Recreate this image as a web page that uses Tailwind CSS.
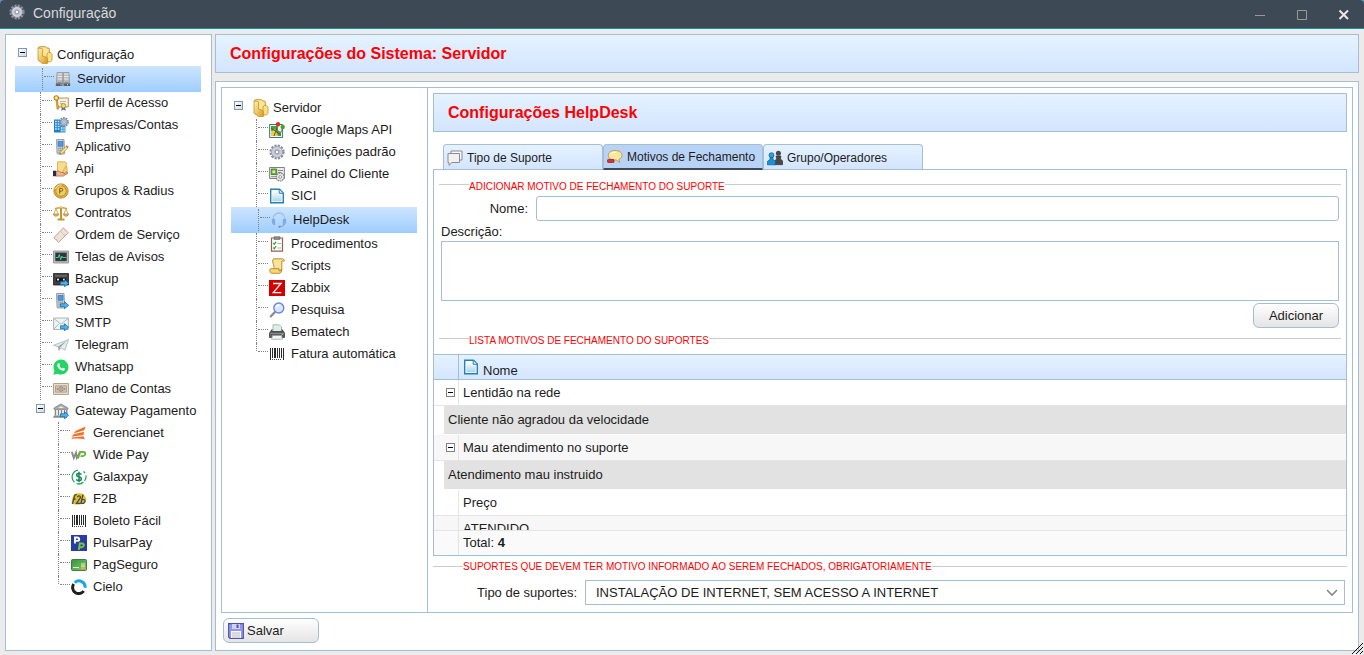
<!DOCTYPE html>
<html lang="pt-BR">
<head>
<meta charset="utf-8">
<meta name="viewport" content="width=device-width, initial-scale=1">
<title>Configuração</title>
<script src="https://cdn.jsdelivr.net/npm/@tailwindcss/browser@4"></script>
</head>
<body class="font-['Liberation_Sans',Arial,sans-serif] text-[13px] text-[#1c1c1c] bg-[#3a9ad0]">

<svg class="absolute size-0" aria-hidden="true">
  <defs>
    <linearGradient id="gGold" x1="0" y1="0" x2="1" y2="1"><stop offset="0" stop-color="#fff3b8"/><stop offset="1" stop-color="#d99a1e"/></linearGradient>
    <linearGradient id="gBlue" x1="0" y1="0" x2="0" y2="1"><stop offset="0" stop-color="#ffffff"/><stop offset="1" stop-color="#a9d4ee"/></linearGradient>
    <linearGradient id="gGreen" x1="0" y1="0" x2="1" y2="1"><stop offset="0" stop-color="#3b9040"/><stop offset="1" stop-color="#7fce6a"/></linearGradient>
  </defs>
  <symbol id="gear" viewBox="0 0 16 16"><circle cx="8" cy="8" r="6.4" fill="none" stroke="#8b8f9f" stroke-width="2.4" stroke-dasharray="2.2 1.15"/><circle cx="8" cy="8" r="5.4" fill="#d3d5e2" stroke="#9295a8" stroke-width=".7"/><circle cx="8" cy="8" r="3.6" fill="#bfc2d1"/><circle cx="8" cy="8" r="1.9" fill="#fff" stroke="#83879a" stroke-width=".9"/></symbol>
  <symbol id="folder" viewBox="0 0 16 18"><path d="M1.500 2q0-1.300 1.300-1.300h5.700L9.600 2h1.700q1 0 1 1v12H2z" fill="#ffe59a" stroke="#c08c1c" stroke-width=".9"/><path d="M10 7.500l1.500-1h2l1.500 1.700v6.300l-1.500 1.300H10z" fill="#ffe08a" stroke="#c8921f" stroke-width=".8"/><path d="M1 2l3.700.500q.9.100.9 1v6.600l3.800 1.200q1 .3 1 1.200v5L5.500 17.500 1 14z" fill="url(#gGold)" stroke="#c8921f" stroke-width=".8"/></symbol>
  <symbol id="server" viewBox="0 0 16 16"><path d="M2 1.500h5.700v11H1.500zM8.300 1.500H14l.5 11H8.300z" fill="#b9b9b9" stroke="#808080" stroke-width=".6"/><path d="M2.500 3h4.800M2.500 5.500h4.800M2.500 8h4.800M8.800 3h4.800M8.800 5.500h4.800M8.800 8h4.800" stroke="#ececec" stroke-width="1"/><path d="M.8 12.500h6.700v2.500H.8zM8.500 12.500h6.700v2.500H8.500z" fill="#606060"/><path d="M2.500 11.400h4M9.500 11.400h4" stroke="#8b8b8b"/><path d="M5.500 13.700h1M12 13.700h1" stroke="#ddd"/></symbol>
  <symbol id="cert" viewBox="0 0 16 16"><path d="M3.500 3h11.800v9H5z" fill="#f6f3e6" stroke="#b48a3c" stroke-width=".9"/><path d="M7 6.500h6M7 8.500h3" stroke="#999" stroke-width=".7"/><circle cx="3.300" cy="3" r="2.300" fill="#ffdc63" stroke="#a87412"/><circle cx="3" cy="2.700" r=".8" fill="#fff"/><path d="M3 5.300l1 9 1.800-.3-.4-1.700 1-.3-.7-1-.6.100-.8-6.100z" fill="#e9b53c" stroke="#9e6c10" stroke-width=".5"/><path d="M9 11.500l-.8 4.200 2.200-1.200 2.300 1.300-.8-4.300z" fill="#3170c9"/><circle cx="10.500" cy="10.800" r="2.300" fill="#ffd65a" stroke="#b3801b" stroke-width=".8"/></symbol>
  <symbol id="company" viewBox="0 0 16 16"><path d="M1 2.500h6.500V15.500H1z" fill="#1f7fc4"/><path d="M7 8.500h5.500v7H7z" fill="#3a98da"/><path d="M2 4.500h1.800M4.700 4.500h1.800M2 7h1.800M4.700 7h1.800M2 9.500h1.800M4.700 9.500h1.800M2 12h1.800M4.700 12h1.800M8 11h1.600M10.400 11h1.300M8 13.500h1.600M10.400 13.500h1.300" stroke="#c7e8fb" stroke-width="1.400"/><circle cx="11" cy="5" r="4" fill="none" stroke="#75869a" stroke-width="1.800" stroke-dasharray="1.600 .9"/><circle cx="11" cy="5" r="3.200" fill="#b6c9dc" stroke="#7287a0" stroke-width=".7"/><circle cx="11" cy="5" r="1.200" fill="#fff" stroke="#6e8096" stroke-width=".6"/></symbol>
  <symbol id="phone" viewBox="0 0 16 16"><path d="M3.500.500h7.500l.7 13.600q0 .9-1 .9H5q-1 0-1-.9z" fill="#cdd1d4" stroke="#878c91" stroke-width=".8"/><path d="M5 2.500h5v4.800H5.200z" fill="#4b9ade" stroke="#2c6dab" stroke-width=".6"/><path d="M5.300 9.200h5M5.400 11.200h5M5.500 13.200h5" stroke="#747a80" stroke-dasharray="1.200 .6"/></symbol>
  <symbol id="phonepen" viewBox="0 0 16 16"><use href="#phone"/><path d="M6.800 15.300l.5-2.100 6-6 1.700 1.600-6.100 6z" fill="#ffe57e" stroke="#9f7a21" stroke-width=".6"/><path d="M12.700 7.500l1.200-1.200 1.800 1.700-1.200 1.200z" fill="#e06666"/><path d="M6.800 15.300l.3-1 .8.7z" fill="#222"/></symbol>
  <symbol id="arrow" viewBox="0 0 16 16"><path d="M7.500 10.800h4V8.700l4.100 3.600-4.100 3.500v-2.100h-4z" fill="#49b4f2" stroke="#196cae" stroke-width=".8"/></symbol>
  <symbol id="phonearrow" viewBox="0 0 16 16"><use href="#phone"/><use href="#arrow"/></symbol>
  <symbol id="api" viewBox="0 0 16 16"><path d="M4.500.8h7.800l1 1v10.500H4.500z" fill="#fbdc8b" stroke="#d7a53f" stroke-width=".8"/><path d="M12.400 5.500l1.800.8v7H8z" fill="#f3cd74" stroke="#cf9a38" stroke-width=".6"/><path d="M3 10.600q3-1.500 5 .8l2.700.2q1 .5 0 1.400l2.700-1.800q1.700-.2 1.200.9l-4.200 3H3z" fill="#ecb48b" stroke="#a8673d" stroke-width=".7"/><path d="M0 9.800h3v5.400H0z" fill="#252b49"/></symbol>
  <symbol id="coin" viewBox="0 0 16 16"><circle cx="8" cy="8" r="7.200" fill="#dcae3c" stroke="#a97b18" stroke-width=".7"/><circle cx="8" cy="8" r="5.200" fill="#eccb68" stroke="#b78923" stroke-width=".8"/><path d="M6.700 10.800V5.400h1.600q1.500 0 1.500 1.400T8.300 8.200H6.800" fill="none" stroke="#8a5f0d" stroke-width="1"/><path d="M2.500 6Q4.300 1.900 8.500 2" stroke="#ffeab0" fill="none"/></symbol>
  <symbol id="scale" viewBox="0 0 16 16"><path d="M8 1v13M4.500 14.500h7" stroke="#c9942f" stroke-width="2"/><path d="M2 3.500q3-1 6-.5 3-.5 6 .5" stroke="#c98f2a" stroke-width="1.300" fill="none"/><path d="M3 4L.8 9M3 4l2.200 5M13 4l-2.200 5M13 4l2.200 5" stroke="#c7963e" stroke-width=".8"/><path d="M.3 9h5.400q-.4 2.300-2.700 2.300T.3 9zM10.300 9h5.400q-.4 2.300-2.700 2.300T10.300 9z" fill="#e5b855" stroke="#a8751b" stroke-width=".6"/><circle cx="8" cy="2" r="1.300" fill="#f3cd75"/></symbol>
  <symbol id="ticket" viewBox="0 0 16 16"><path d="M.7 11L10.300.9l1.600 1.400q-.2 1.300 1.300 1.400l2.100 2L5.600 15.300l-1.700-1.500q.2-1.500-1.300-1.300z" fill="#f0e3d6" stroke="#b79e8b" stroke-width=".9"/><path d="M7.500 4.500l4.600 4.200" stroke="#b49a85" stroke-width=".8" stroke-dasharray="1 .7"/></symbol>
  <symbol id="monitor" viewBox="0 0 16 16"><path d="M.5 2h15v12H.5z" fill="#c4c4c4" stroke="#888" stroke-width=".8"/><path d="M2.300 3.700h11.400v8.300H2.300z" fill="#2c3638" stroke="#606060" stroke-width=".6"/><path d="M3 8.500h2.300l1-3 1.400 5 1.200-3.400.8 1.400h3.500" fill="none" stroke="#52dba8" stroke-width=".9"/></symbol>
  <symbol id="tape" viewBox="0 0 16 16"><path d="M.5 2.500h15v11.500H.5z" fill="#3e3e3e" stroke="#222" stroke-width=".8"/><path d="M2 3.800h12v2H2z" fill="#666"/><path d="M3 7h10v3.500H3z" fill="#171717"/><circle cx="5" cy="8.600" r="1.100" fill="#e5e5e5"/><circle cx="11" cy="8.600" r="1.100" fill="#e5e5e5"/><use href="#arrow"/></symbol>
  <symbol id="mail" viewBox="0 0 16 16"><path d="M.6 3h14.800v11.500H.6z" fill="#eef4f3" stroke="#94a7a5" stroke-width=".8"/><path d="M1 3.500l7 5.700 7-5.700M1 14l5-5.300M15 14l-5-5.300" fill="none" stroke="#9cb0ad" stroke-width=".8"/><use href="#arrow"/></symbol>
  <symbol id="plane" viewBox="0 0 16 16"><path d="M.4 8.300L15.600 2.500 12 13.200 7.900 10.800 6 13.600 5.200 9.600z" fill="#e3ebea" stroke="#9fb0ae" stroke-width=".7"/><path d="M5.200 9.600l8.800-6L7 10.400 6 13.400z" fill="#8fa5a2"/></symbol>
  <symbol id="whats" viewBox="0 0 16 16"><path d="M.3 15.700l1.100-4A7.500 7.500 0 1 1 4.500 14.700z" fill="#25d366"/><path d="M5.200 4.200q.8-.6 1.200.3l.6 1.400q.1.400-.7 1.100 1 1.900 2.800 2.700.8-1 1.100-.9l1.500.8q.5.300 0 1.200-.8 1.300-2.600.8Q5.600 10.400 4.400 7.400 3.900 5.200 5.200 4.200z" fill="#fff"/></symbol>
  <symbol id="money" viewBox="0 0 16 16"><path d="M.5 2.500h15v11H.5z" fill="#e8dccb" stroke="#a99a87" stroke-width=".9"/><path d="M2.500 4.800h11v6.400h-11z" fill="#d3c4b0" stroke="#9f8f7c" stroke-width=".7"/><circle cx="8" cy="8" r="2.100" fill="#f3eadc" stroke="#716354" stroke-width=".8"/><path d="M3.800 8h1.200M11 8h1.200M8 7v2" stroke="#6b5e50"/></symbol>
  <symbol id="bank" viewBox="0 0 16 16"><path d="M1 5L8 .9 15 5v1.400H1z" fill="#aaa" stroke="#777" stroke-width=".7"/><path d="M5 5l3-1.800L11 5z" fill="#eee"/><path d="M2.500 7v5.500M5.500 7v5.500M8.500 7v5.500M11.500 7v5.500M13.800 7v5" stroke="#858585" stroke-width="1.400"/><path d="M1 12.500h13v2.200H0z" fill="#8b8b8b"/><use href="#arrow"/></symbol>
  <symbol id="gnet" viewBox="0 0 16 16"><path d="M4.500 6L14.500 1.500 13.300 5.300 2.500 8.500zM2.700 9.200l10.300-2.500-.5 3.300-12 1.800zM1 12.500l11.500-1.300 1.300 3Q8 12.800.3 13.800z" fill="#f3722b"/></symbol>
  <symbol id="wide" viewBox="0 0 16 16"><path d="M.8 4.800l2 6 2.200-5 .8 5 3.500-6" fill="none" stroke="#8b8b8b" stroke-width="1.900"/><path d="M7 11.500l2-6.500h3.500q2.800.6 1.300 3-1 1.500-4.300 1.300" fill="none" stroke="#6db33f" stroke-width="2"/></symbol>
  <symbol id="galax" viewBox="0 0 16 16"><path d="M7 1.200A7 7 0 0 0 3.500 13.300M5.500 14.600A7 7 0 0 0 12.500 13M13.500 11.800A7 7 0 0 0 15 6.500M14 4.200A7 7 0 0 0 12.500 2.500" fill="none" stroke="#25a36b" stroke-width="1.300"/><path d="M10.500 5.500Q10 4.400 8 4.400 5.500 4.500 5.700 6.200 5.900 7.700 8 8q2.400.3 2.400 2 0 1.600-2.400 1.700-2.200 0-2.600-1.500M8 2.800v10.400" fill="none" stroke="#17875a" stroke-width="1.500"/></symbol>
  <symbol id="f2b" viewBox="0 0 16 16"><path d="M3 3.500Q8 1 13 3.500L15.500 8Q15 13 9 13.500 3 14 .6 12.500 1 6 3 3.500z" fill="#eac021"/><path d="M1.500 13L3.500 5q.5-1.700 2.200-1.500M2.200 8.200h2.600M6.500 6.200Q7 4.500 8.500 5t.5 2.500L5.500 12.300h4M12 3.500l-2 8.500q3.700 1 4-1.500.3-2.500-3.300-1.800" fill="none" stroke="#3c4a63" stroke-width="1.300"/></symbol>
  <symbol id="barcode" viewBox="0 0 16 16"><path d="M1 2h1v12H1zM3 2h1v10H3zM5 2h2v10H5zM8 2h1v10H8zM10 2h1v10h-1zM12 2h1v10h-1zM14 2h1v12h-1z" fill="#2a2a2a" shape-rendering="crispEdges"/><path d="M3 13.500h10" stroke="#444" stroke-dasharray="1 1"/></symbol>
  <symbol id="pulsar" viewBox="0 0 16 16"><path d="M0 0h16v16H0z" fill="#263da4"/><path d="M4 8.500v-6h2.200q2 0 2 1.700t-2 1.700H4" fill="none" stroke="#fff" stroke-width="1.900"/><path d="M7.800 14.800l1-6.300H11q2.200.2 1.800 2-.4 1.700-2.400 1.700H8.500" fill="none" stroke="#78c839" stroke-width="1.900"/></symbol>
  <symbol id="card" viewBox="0 0 16 16"><rect x=".5" y="2.500" width="15" height="11" rx="1" fill="url(#gGreen)" stroke="#2f7635" stroke-width=".9"/><path d="M2 10.500h6M10 7h4" stroke="#d9f2cc"/><path d="M10 9.700h4v2.600h-4z" fill="#f0a63a"/><path d="M10 9h4" stroke="#f4f4f4"/></symbol>
  <symbol id="cielo" viewBox="0 0 16 16"><path d="M3.800 3.700A6 6 0 0 1 14 8.800" fill="none" stroke="#16a5e8" stroke-width="3"/><path d="M2.700 5A6 6 0 0 0 12.700 12" fill="none" stroke="#231f20" stroke-width="3"/></symbol>
  <symbol id="maps" viewBox="0 0 16 16"><path d="M.6 2.500h13v13H.6z" fill="#f5f6ec" stroke="#2c6287" stroke-width=".9"/><path d="M2 4h6v4l4 2v4H7L5 10 2 9z" fill="#4aa43d"/><path d="M2 10l4-3 3 7H2z" fill="#f2cd44"/><path d="M2 6l10 7M9 3L5 14" stroke="#4c4f3a" stroke-width=".9"/><path d="M8.500 3v6M13.600 6l-2 5" stroke="#777"/><circle cx="9" cy="2.300" r="2.200" fill="#e22a20"/><circle cx="13.700" cy="5" r="2.200" fill="#3ba829"/></symbol>
  <symbol id="idcard" viewBox="0 0 16 16"><path d="M.6 1.500h14.800v11H.6z" fill="#ededed" stroke="#747474" stroke-width=".9"/><path d="M2.200 3h5.500v5.500H2.200z" fill="#70b13c" stroke="#3f7321" stroke-width=".8"/><path d="M3.500 4.500h2.500v2.500H3.500z" fill="#d8efb7"/><path d="M9 4.500h5M9 6.500h3M2 10.700h5" stroke="#888"/><circle cx="11.200" cy="11" r="4" fill="#e6e6e6" stroke="#777" stroke-width="1.100" stroke-dasharray="1.700 .7"/><circle cx="11.200" cy="11" r="1.400" fill="#fff" stroke="#777" stroke-width=".7"/></symbol>
  <symbol id="page" viewBox="0 0 16 16"><path d="M1.700 1.200h8.800l3.800 3.800v9.800H1.700z" fill="#fff" stroke="#2381b3" stroke-width="1.400"/><path d="M3.300 3h6v3.500h3.400v6.800H3.300z" fill="url(#gBlue)"/><path d="M10.200 1.500v3.800h3.800" fill="#d7eefa" stroke="#2381b3"/></symbol>
  <symbol id="headset" viewBox="0 0 16 16"><path d="M2 9V7a6 6 0 0 1 12 0v2" fill="none" stroke="#9dc1ee" stroke-width="1.300"/><path d="M1.300 7.500h2.400v5H2.600Q1 12 1.300 7.500zM12.300 7.500h2.400q.3 4.500-1.300 5h-1.100z" fill="#86b0e6" stroke="#6e97d1" stroke-width=".6"/><path d="M13.500 12.500q-1 2-4.500 2" fill="none" stroke="#7794bb" stroke-width=".8"/><circle cx="8.500" cy="14.700" r="1" fill="#6c87ac"/></symbol>
  <symbol id="clip" viewBox="0 0 16 16"><path d="M2.500 2h11v13.200h-11z" fill="#fff" stroke="#956147" stroke-width="1.200"/><path d="M5 .7h6v2.800H5z" fill="#8a8a8a" stroke="#555" stroke-width=".5"/><path d="M4.300 7l1 1.200 1.900-2.500M4.300 11.500l1 1.200 1.900-2.500" fill="none" stroke="#37a13b" stroke-width="1.200"/><path d="M8.500 7.500h3.500M8.500 12h3.500" stroke="#999" stroke-width=".8"/></symbol>
  <symbol id="scroll" viewBox="0 0 16 16"><path d="M4.500.8h9q2 .2 1.800 2.300h-2.500V12L4 12.500Q6 9.500 4.500 6.500 2.500 2.500 4.500.8z" fill="#fae29a" stroke="#b98417" stroke-width=".9"/><path d="M.8 12.500q-.3-1.800 1.200-1.800h8q-.9 2 .7 2.200 1.800 0 2-1.600.3 3.600-2 4H2.500Q.8 15 .8 12.500z" fill="#f7d67a" stroke="#b98417" stroke-width=".9"/></symbol>
  <symbol id="zabbix" viewBox="0 0 16 16"><path d="M0 0h16v16H0z" fill="#d40000"/><path d="M4 3.500h8L4.300 12.700H12.300" fill="none" stroke="#fff" stroke-width="1.300"/></symbol>
  <symbol id="search" viewBox="0 0 16 16"><path d="M1.200 15l5-5.300" stroke="#8a8a92" stroke-width="2.300"/><circle cx="9.800" cy="6" r="5" fill="#d7e6ff" stroke="#6b86d7" stroke-width="1.400"/><path d="M7 5.500Q7.700 3 10.500 3" fill="none" stroke="#fff" stroke-width="1.400"/></symbol>
  <symbol id="printer" viewBox="0 0 16 16"><path d="M4 .8h6l2.500 2.200v5H4z" fill="#dceee9" stroke="#8ba49f" stroke-width=".7"/><path d="M3 5.500v2h10v-2l2.500 3.500v4.500H.5V9z" fill="#5e5e5e" stroke="#3d3d3d" stroke-width=".8"/><path d="M1 9.500h14" stroke="#888"/><path d="M3.500 11.500h9l1 3.700h-11z" fill="#f3f8f6" stroke="#8ba49f" stroke-width=".7"/><path d="M12.500 10.500h1.500" stroke="#6be04b"/></symbol>
  <symbol id="chats" viewBox="0 0 16 16"><path d="M4 1h11v9H4z" fill="#fafafa" stroke="#8b8b8b"/><path d="M1 3.500h11.500v9H5l-3 2.800v-2.800H1z" fill="#f1f1f1" stroke="#8b8b8b"/></symbol>
  <symbol id="bubble" viewBox="0 0 16 16"><path d="M8 1.500c4.500 0 7 2 7 4.800 0 2-1.200 3.400-3 4.100l.8 3-3.700-2.500C4 11.200 1.300 9.300 1.300 6.300S4 1.500 8 1.500z" fill="#f8e79d" stroke="#bb9546" stroke-width=".9"/><path d="M4 4.500Q6 3 9 3.200" stroke="#fff" fill="none"/><rect x=".5" y="10.500" width="6.500" height="3" rx=".8" fill="#d9303a" stroke="#99151e" stroke-width=".7"/></symbol>
  <symbol id="users" viewBox="0 0 16 16"><circle cx="11.400" cy="3.300" r="2.500" fill="#484848"/><path d="M9 6h5l-.5 3 2.300 2v3.700H7.500V11L9.500 9z" fill="#484848" stroke="#222" stroke-width=".5"/><circle cx="4.500" cy="5.200" r="2.500" fill="#2ba0dc" stroke="#0e5e8d" stroke-width=".7"/><path d="M3 7.500h3v2l2.500 1.800v3.500H.5v-3.500L3 9.500z" fill="#1992d1" stroke="#0e5e8d" stroke-width=".7"/></symbol>
  <symbol id="floppy" viewBox="0 0 16 16"><path d="M.6.600h14.800v14.800H2l-1.400-1.400z" fill="#9396ea" stroke="#4f52ab" stroke-width="1.100"/><path d="M4 1h8v5H4z" fill="#cfd3f3"/><path d="M8.500 1.500h2v3.500h-2z" fill="#4f52ab"/><path d="M3 8h10v7H3z" fill="#fafafa"/><path d="M4 10h8M4 12h8M4 14h8" stroke="#b6b6bd" stroke-width=".9"/></symbol>
</svg>

<div class="h-screen flex flex-col bg-[#ebebeb] rounded-t-[4px] overflow-hidden">
  <header class="h-[29px] shrink-0 flex items-center bg-[#3d4a56] border-b border-[#0e92ab] pl-[9px] text-[#d9d9d9]">
    <svg class="size-4 -mt-[5px] mr-2"><use href="#gear"/></svg>
    <h1 class="text-[14px] grow -mt-[2px]">Configuração</h1>
    <button aria-label="Minimizar" class="w-[42px] h-7 flex items-center justify-center"><svg class="size-[11px]" viewBox="0 0 11 11"><path d="M1 6.500h10" stroke="#999"/></svg></button>
    <button aria-label="Maximizar" class="w-[42px] h-7 flex items-center justify-center"><svg class="size-[11px]" viewBox="0 0 11 11"><path d="M1.500 1.500h9v9h-9z" fill="none" stroke="#999"/></svg></button>
    <button aria-label="Fechar" class="w-[42px] h-7 flex items-center justify-center"><svg class="size-[11px]" viewBox="0 0 11 11"><path d="M1.500 1.500l8.500 8.500M10 1.500L1.500 10" stroke="#e8e8e8" stroke-width="2"/></svg></button>
  </header>

  <div class="grow min-h-0 flex gap-[3px] px-[5px] pt-[5px] pb-1">
    <nav aria-label="Configuração" class="w-[207px] shrink-0 bg-white border border-[#a4bed4] py-[9px] pl-[9px] pr-[10px] overflow-hidden"><ul id="treeMain"></ul></nav>

    <div class="grow min-w-0 flex flex-col gap-2">
      <h2 class="h-[39px] shrink-0 flex items-center px-[14px] border border-[#a4bed4] bg-linear-to-b from-[#e5f2ff] to-[#d3e5ff] text-[16px] font-bold text-[#ff0000]">Configurações do Sistema: Servidor</h2>

      <main class="grow min-h-0 flex flex-col bg-white border border-[#a4bed4] p-[5px] pb-[7px]">
        <div class="grow min-h-0 flex border border-[#a4bed4]">
          <nav aria-label="Servidor" class="w-[206px] shrink-0 border-r border-[#a4bed4] py-[9px] pl-[9px] pr-[10px] overflow-hidden"><ul id="treeServer"></ul></nav>

          <section class="grow min-w-0 flex flex-col p-[5px] pb-[7px]">
            <h3 class="h-[39px] shrink-0 flex items-center px-[14px] border border-[#a4bed4] bg-linear-to-b from-[#e5f2ff] to-[#d3e5ff] text-[16px] font-bold text-[#ff0000]">Configurações HelpDesk</h3>

            <div role="tablist" class="flex pl-[10px] mt-3 text-[12px] border-b border-[#a4bed4]">
              <button role="tab" aria-selected="false" class="w-40 h-[25px] flex items-center gap-1 px-[3px] pt-px border border-b-0 border-[#a4bed4] rounded-t-[4px] bg-linear-to-b from-[#e5f2ff] to-[#d3e5ff]"><svg class="size-4"><use href="#chats"/></svg>Tipo de Suporte</button>
              <button role="tab" aria-selected="true" class="w-40 h-[26px] -mb-px flex items-center gap-1 px-[3px] border border-b-2 border-[#a4bed4] border-b-[#3d4a56] rounded-t-[4px] bg-[#b8d3f6]"><svg class="size-4"><use href="#bubble"/></svg>Motivos de Fechamento</button>
              <button role="tab" aria-selected="false" class="w-40 h-[25px] flex items-center gap-1 px-[3px] pt-px border border-b-0 border-[#a4bed4] rounded-t-[4px] bg-linear-to-b from-[#e5f2ff] to-[#d3e5ff]"><svg class="size-4"><use href="#users"/></svg>Grupo/Operadores</button>
            </div>

            <div role="tabpanel" class="grow min-h-0 flex flex-col border border-t-0 border-[#a4bed4] pt-[6px]">
              <fieldset class="mx-[5px] border-t border-[#cccccc] px-[2px] shrink-0">
                <legend class="ml-7 pt-[6px] text-[10px] leading-[10px] text-[#ff0000]">ADICIONAR MOTIVO DE FECHAMENTO DO SUPORTE</legend>
                <div class="flex items-center mt-1">
                  <label for="nome" class="w-[95px] pr-2 text-right">Nome:</label>
                  <input id="nome" type="text" class="grow h-[25px] px-2 border border-[#a4bed4] rounded-[3px] bg-white outline-none">
                </div>
                <label for="descricao" class="block pt-[2px] leading-[18px]">Descrição:</label>
                <textarea id="descricao" class="block w-full h-[60px] p-1 border border-[#a4bed4] resize-none bg-white outline-none"></textarea>
                <div class="flex justify-end mt-[2px]"><button class="h-[25px] w-[86px] border border-[#a4bed4] rounded-[6px] bg-linear-to-b from-white to-[#e4e4e4]">Adicionar</button></div>
              </fieldset>
              <fieldset class="mx-[5px] mt-[2px] border-t border-[#cccccc] px-[2px] pb-2 shrink-0">
                <legend class="ml-7 pt-[6px] text-[10px] leading-[10px] text-[#ff0000]">LISTA MOTIVOS DE FECHAMENTO DO SUPORTES</legend>
              </fieldset>
              <div class="grow min-h-0 basis-0 overflow-hidden">
                <table class="w-full table-fixed border-separate border-spacing-0">
                  <colgroup><col class="w-[10px]"><col class="w-[15px]"><col></colgroup>
                  <thead>
                    <tr class="h-[26px] bg-linear-to-b from-[#e5f2ff] to-[#d3e5ff]">
                      <th colspan="2" class="border-y border-r border-[#a4bed4] p-0"></th>
                      <th class="border-y border-[#a4bed4] p-0 pl-1 text-left font-normal"><span class="flex items-center gap-1 h-6"><svg class="size-4"><use href="#page"/></svg><span class="pt-2">Nome</span></span></th>
                    </tr>
                  </thead>
                  <tbody>
                    <tr class="h-[26px]">
                      <td colspan="2" class="border-b border-r border-[#e5e5e5] p-0 pl-3"><button aria-label="Recolher" class="flex items-center size-[9px] border border-[#808080] bg-white"><span class="block w-full h-px mx-px bg-black"></span></button></td>
                      <td class="border-b border-[#e5e5e5] p-0 pl-1">Lentidão na rede</td>
                    </tr>
                    <tr class="h-[29px]"><td class="p-0"></td><td colspan="2" class="border-b border-white bg-[#e2e2e2] p-0 pl-1">Cliente não agradou da velocidade</td></tr>
                    <tr class="h-[26px] bg-[#f7f7f7]">
                      <td colspan="2" class="border-b border-r border-[#e5e5e5] p-0 pl-3"><button aria-label="Recolher" class="flex items-center size-[9px] border border-[#808080] bg-white"><span class="block w-full h-px mx-px bg-black"></span></button></td>
                      <td class="border-b border-[#e5e5e5] p-0 pl-1">Mau atendimento no suporte</td>
                    </tr>
                    <tr class="h-[29px]"><td class="p-0"></td><td colspan="2" class="border-b border-white bg-[#e2e2e2] p-0 pl-1">Atendimento mau instruido</td></tr>
                    <tr class="h-[26px]"><td colspan="2" class="border-b border-r border-[#e5e5e5] p-0"></td><td class="border-b border-[#e5e5e5] p-0 pl-1">Preço</td></tr>
                    <tr class="h-[26px] bg-[#f7f7f7]"><td colspan="2" class="border-b border-r border-[#e5e5e5] p-0"></td><td class="border-b border-[#e5e5e5] p-0 pl-1">ATENDIDO</td></tr>
                  </tbody>
                </table>
              </div>
              <div class="h-[25px] shrink-0 flex items-stretch border-t border-[#e5e5e5] bg-[#fafafa]">
                <div class="w-[25px] border-r border-[#e5e5e5]"></div>
                <p class="pl-1 leading-6">Total: <b>4</b></p>
              </div>
            </div>

            <fieldset class="mt-1 border-t border-[#cccccc] pr-[2px] shrink-0">
              <legend class="ml-[30px] pt-[2px] text-[10px] leading-[10px] text-[#ff0000]">SUPORTES QUE DEVEM TER MOTIVO INFORMADO AO SEREM FECHADOS, OBRIGATORIAMENTE</legend>
              <div class="flex items-center mt-2">
                <label for="tipos" class="w-[152px] pr-2 text-right">Tipo de suportes:</label>
                <div class="grow relative">
                  <select id="tipos" class="block w-full h-[25px] appearance-none border border-[#a4bed4] bg-white pl-[10px] pr-7 outline-none"><option>INSTALAÇÃO DE INTERNET, SEM ACESSO A INTERNET</option></select>
                  <svg class="absolute right-[7px] top-[9px] w-3 h-2 pointer-events-none" viewBox="0 0 12 8"><path d="M1 1l5 5 5-5" fill="none" stroke="#8a8a8a" stroke-width="1.700"/></svg>
                </div>
              </div>
            </fieldset>
          </section>
        </div>
        <button class="mt-[5px] ml-[2px] w-24 h-[25px] shrink-0 flex items-center gap-[3px] pl-1 border border-[#a4bed4] rounded-[6px] bg-linear-to-b from-white to-[#e4e4e4]"><svg class="size-4"><use href="#floppy"/></svg><span class="pt-px">Salvar</span></button>
      </main>
    </div>
  </div>
  <svg class="fixed right-0 bottom-0 size-3" viewBox="0 0 12 12"><path d="M0 11L11 0M4 11l7-7M8 11l3-3" stroke="#111" fill="none"/></svg>
</div>

<script>
const mainTree = { icon: 'folder', label: 'Configuração', items: [
  ['server', 'Servidor', 'selected'], ['cert', 'Perfil de Acesso'], ['company', 'Empresas/Contas'], ['phonepen', 'Aplicativo'],
  ['api', 'Api'], ['coin', 'Grupos & Radius'], ['scale', 'Contratos'], ['ticket', 'Ordem de Serviço'], ['monitor', 'Telas de Avisos'],
  ['tape', 'Backup'], ['phonearrow', 'SMS'], ['mail', 'SMTP'], ['plane', 'Telegram'], ['whats', 'Whatsapp'], ['money', 'Plano de Contas'],
  ['bank', 'Gateway Pagamento', 'open', [
    ['gnet', 'Gerencianet'], ['wide', 'Wide Pay'], ['galax', 'Galaxpay'], ['f2b', 'F2B'], ['barcode', 'Boleto Fácil'],
    ['pulsar', 'PulsarPay'], ['card', 'PagSeguro'], ['cielo', 'Cielo']]]
]};
const serverTree = { icon: 'folder', label: 'Servidor', items: [
  ['maps', 'Google Maps API'], ['gear', 'Definições padrão'], ['idcard', 'Painel do Cliente'], ['page', 'SICI'],
  ['headset', 'HelpDesk', 'selected'], ['clip', 'Procedimentos'], ['scroll', 'Scripts'], ['zabbix', 'Zabbix'],
  ['search', 'Pesquisa'], ['printer', 'Bematech'], ['barcode', 'Fatura automática']
]};

const toggle = '<button aria-label="Recolher" class="size-[9px] shrink-0 self-start mt-1 flex items-center justify-center border border-[#7b9ab5] bg-linear-to-br from-white to-[#d5d8dc]"><span class="block w-[5px] h-px bg-black"></span></button>';
const icon = id => `<svg class="size-4 shrink-0"><use href="#${id}"/></svg>`;
const text = s => s.replace('&', '&amp;');

function leaf([id, label, state, children], last) {
  if (children) {
    return `<li><div class="flex items-center h-[22px] pl-[21px]">${toggle}<a href="#" class="flex items-center gap-[6px] pl-2">${icon(id)}${text(label)}</a></div>
      <ul class="pl-[18px]">${children.map((c, i) => leaf(c, i === children.length - 1)).join('')}</ul></li>`;
  }
  const line = last ? 'h-2 border-l border-dotted border-[#808080]' : 'h-[22px] border-l border-dotted border-[#808080]';
  const item = state === 'selected' ? 'flex p-[2px] bg-linear-to-b from-[#cde5ff] to-[#9fcdff]' : 'flex';
  return `<li class="${item}"><span class="w-[25px] shrink-0"></span><span class="${line}"></span>
    <span class="w-[10px] mt-2 ml-px h-px shrink-0 border-t border-dotted border-[#808080]"></span>
    <a href="#" class="flex items-center gap-[6px] ml-px h-[22px] whitespace-nowrap">${icon(id)}<span class="leading-5">${text(label)}</span></a></li>`;
}
function tree(root) {
  return `<li><div class="flex items-center h-[22px] pl-[3px]">${toggle}<a href="#" class="flex items-center gap-1 pl-[10px]"><svg class="w-4 h-[18px] shrink-0"><use href="#${root.icon}"/></svg><span class="leading-5 pb-px">${root.label}</span></a></div>
    <ul>${root.items.map((c, i) => leaf(c, i === root.items.length - 1)).join('')}</ul></li>`;
}
document.getElementById('treeMain').innerHTML = tree(mainTree);
document.getElementById('treeServer').innerHTML = tree(serverTree);
</script>
</body>
</html>
